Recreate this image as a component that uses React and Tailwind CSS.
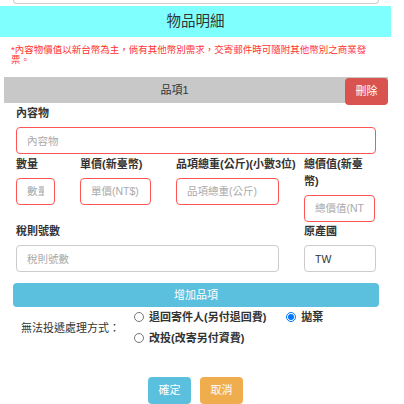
const font = { fontFamily: '"Liberation Sans", "Noto Sans CJK TC", sans-serif' };

const Label = ({ children, className = '' }) => (
  <div className={`text-[11px] font-bold leading-[17px] text-[#333] ${className}`}>{children}</div>
);

const Field = ({ placeholder, value, w, red = true }) => (
  <input
    className={`block h-[27px] ${w} rounded-[4px] border bg-white px-[10px] text-[10.5px] text-[#333] outline-none placeholder:text-[#aaa] ${red ? 'border-[#f55]' : 'border-[#ccc]'}`}
    placeholder={placeholder}
    defaultValue={value}
  />
);

const Radio = ({ label, checked }) => (
  <label className="flex items-center gap-[5px] text-[11px] font-bold text-[#333]">
    <input type="radio" name="undeliverable" defaultChecked={checked} className="m-0 h-[10px] w-[10px] accent-[#0075ff]" />
    {label}
  </label>
);

export default function App() {
  return (
    <div className="w-[391px] bg-white pb-[2px]" style={font}>
      <div className="mx-[13px] h-[4px] w-[366px] rounded-b-[4px] border border-t-0 border-[#ccc]" />

      <div className="mt-[2px] flex h-[31px] items-center justify-center bg-[#80ffff] text-[14.5px] text-[#333]">
        物品明細
      </div>

      <p className="mt-[8px] w-[370px] pl-[11px] text-[9.5px] leading-[10px] text-[#f33]">
        *內容物價值以新台幣為主，倘有其他幣別需求，交寄郵件時可隨附其他幣別之商業發票。
      </p>

      <div className="mx-[4px] mt-[12px] flex h-[26px] w-[384px] items-start bg-[#c8c8c8]">
        <div className="flex h-[26px] flex-1 items-center justify-center text-[11px] text-[#333]">品項1</div>
        <button className="mt-[1px] h-[27px] w-[43px] rounded-[4px] bg-[#d9534f] text-[11px] text-white">刪除</button>
      </div>

      <div className="px-[16px]">
        <Label className="mt-[2px] mb-[5px]">內容物</Label>
        <Field placeholder="內容物" w="w-[360px]" />

        <div className="mt-[1.5px] grid grid-cols-[64px_96px_128px_80px]">
          <div>
            <Label className="mb-[5px]">數量</Label>
            <Field placeholder="數量" w="w-[39px] px-[8px]" />
          </div>
          <div>
            <Label className="mb-[5px]">單價(新臺幣)</Label>
            <Field placeholder="單價(NT$)" w="w-[71px] px-[10px]" />
          </div>
          <div>
            <Label className="mb-[5px]">品項總重(公斤)(小數3位)</Label>
            <Field placeholder="品項總重(公斤)" w="w-[103px]" />
          </div>
          <div>
            <Label className="mb-[5px] w-[64px]">總價值(新臺幣)</Label>
            <Field placeholder="總價值(NT$)" w="w-[71px]" />
          </div>
        </div>

        <div className="mt-[1.5px] grid grid-cols-[288px_72px]">
          <div>
            <Label className="mb-[5px]">稅則號數</Label>
            <Field placeholder="稅則號數" w="w-[263px]" red={false} />
          </div>
          <div>
            <Label className="mb-[5px]">原產國</Label>
            <Field value="TW" w="w-[72px]" red={false} />
          </div>
        </div>
      </div>

      <button className="mx-[13px] mt-[11px] h-[24px] w-[366px] rounded-[4px] bg-[#5bc0de] text-[11px] text-white">
        增加品項
      </button>

      <div className="flex items-center">
        <div className="w-[134px] pl-[21px] text-[11px] text-[#333]">無法投遞處理方式：</div>
        <div className="flex flex-col">
          <div className="flex h-[20px] items-center gap-[20px]">
            <Radio label="退回寄件人(另付退回費)" />
            <Radio label="拋棄" checked />
          </div>
          <div className="flex h-[22px] items-center">
            <Radio label="改投(改寄另付資費)" />
          </div>
        </div>
      </div>

      <div className="mt-[28px] flex justify-center gap-[9px]">
        <button className="h-[27px] w-[43px] rounded-[4px] bg-[#5bc0de] text-[11px] text-white">確定</button>
        <button className="h-[27px] w-[43px] rounded-[4px] bg-[#f0ad4e] text-[11px] text-white">取消</button>
      </div>
    </div>
  );
}
